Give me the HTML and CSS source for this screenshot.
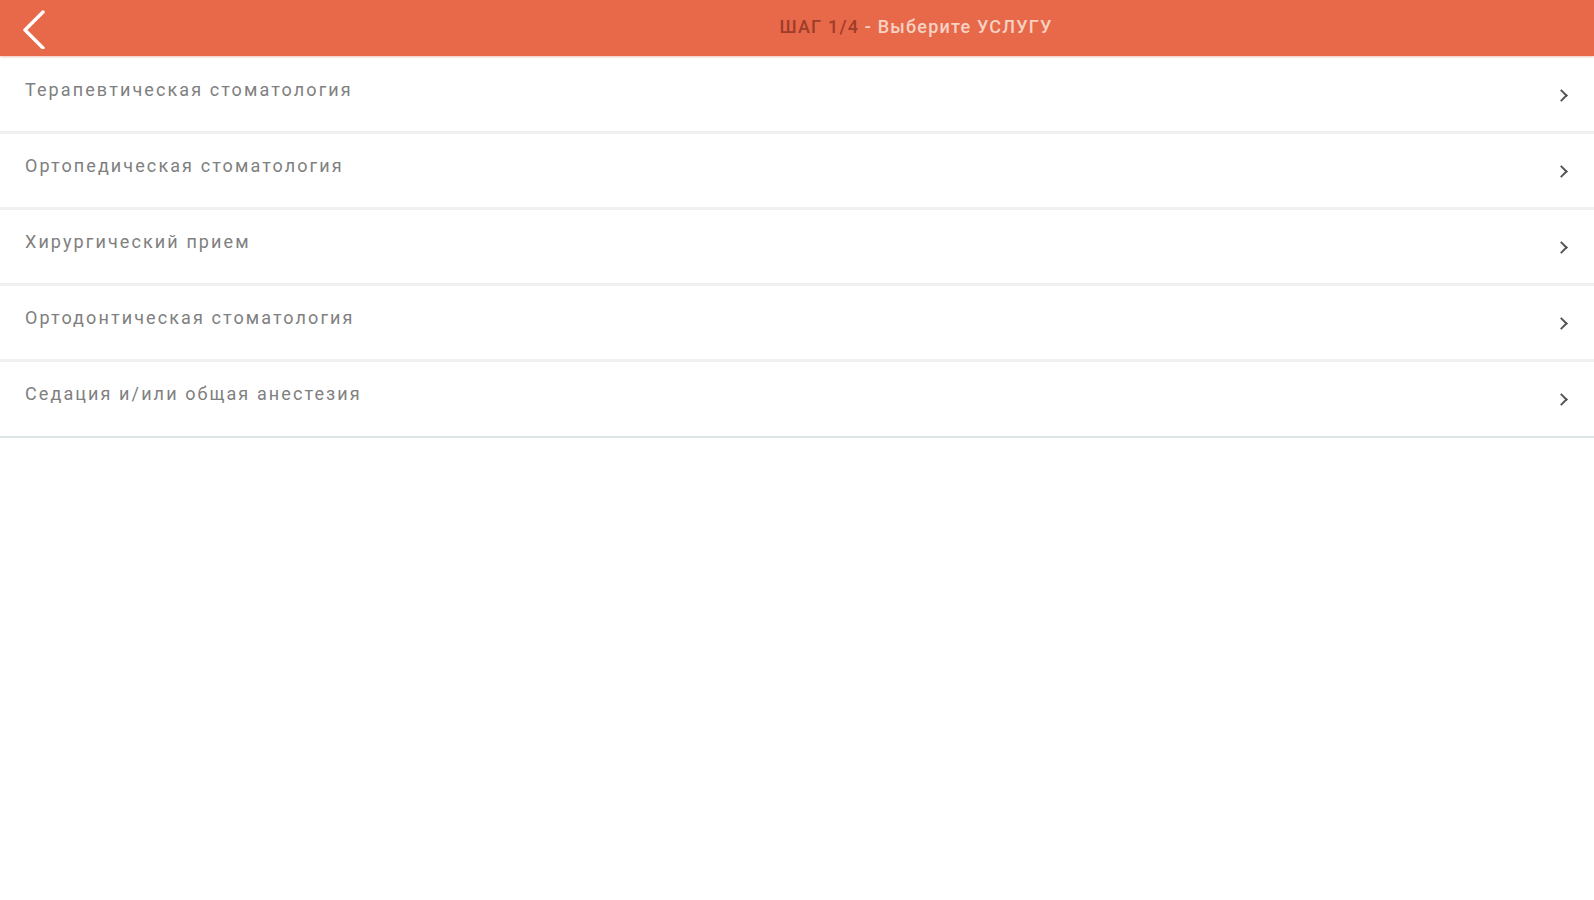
FILE: index.html
```html
<!DOCTYPE html>
<html lang="ru">
<head>
    <meta charset="UTF-8">
    <meta name="viewport" content="width=device-width, initial-scale=1.0">
    <title>Запись на прием</title>
    <link rel="stylesheet" href="styles.css">
</head>
<body>
    <header class="top-bar">
        <button class="back-btn" aria-label="Назад">
            <svg width="28" height="42" viewBox="0 0 28 42">
                <polyline points="23,5 5,23 23,41" fill="none" stroke="#ffffff" stroke-width="3.4" stroke-linecap="round" stroke-linejoin="round"/>
            </svg>
        </button>
        <div class="title">
            <span class="step">ШАГ 1/4</span> <span class="step-name">- Выберите УСЛУГУ</span>
        </div>
    </header>

    <ul class="service-list">
        <li class="service-item">
            <span>Терапевтическая стоматология</span>
            <span class="chevron"></span>
        </li>
        <li class="service-item">
            <span>Ортопедическая стоматология</span>
            <span class="chevron"></span>
        </li>
        <li class="service-item">
            <span>Хирургический прием</span>
            <span class="chevron"></span>
        </li>
        <li class="service-item">
            <span>Ортодонтическая стоматология</span>
            <span class="chevron"></span>
        </li>
        <li class="service-item last">
            <span>Седация и/или общая анестезия</span>
            <span class="chevron"></span>
        </li>
    </ul>
</body>
</html>
```

FILE: styles.css
```css
* {
    margin: 0;
    padding: 0;
    box-sizing: border-box;
    font-family: Roboto, 'Noto Sans', sans-serif;
}

body {
    background: #ffffff;
    min-height: 100vh;
}

.top-bar {
    height: 56px;
    background: #e8694a;
    display: flex;
    align-items: center;
    box-shadow: 0 1px 2px rgba(200, 80, 50, 0.35);
    position: relative;
    z-index: 1;
}

.back-btn {
    background: none;
    border: none;
    width: 56px;
    height: 56px;
    padding-left: 20px;
    display: flex;
    align-items: center;
    cursor: pointer;
}

.title {
    flex: 1;
    text-align: center;
    padding-left: 238px;
    padding-right: 56px;
    font-size: 18px;
    letter-spacing: 1.2px;
    margin-top: -4px;
}

.step {
    color: #9e3d29;
    font-weight: 500;
}

.step-name {
    color: #f6d2c3;
    font-weight: 500;
}

.service-list {
    list-style: none;
    margin-top: 2px;
}

.service-item {
    height: 76px;
    display: flex;
    justify-content: space-between;
    align-items: flex-start;
    padding: 21px 28px 0 25px;
    border-bottom: 3px solid #eef0f1;
    color: #808080;
    font-size: 18px;
    letter-spacing: 2.1px;
}

.service-item.last {
    border-bottom: 2px solid #dde6e7;
}

.chevron {
    width: 9px;
    height: 9px;
    margin-top: 12px;
    border-top: 2.5px solid #555555;
    border-right: 2.5px solid #555555;
    transform: rotate(45deg);
}
```
